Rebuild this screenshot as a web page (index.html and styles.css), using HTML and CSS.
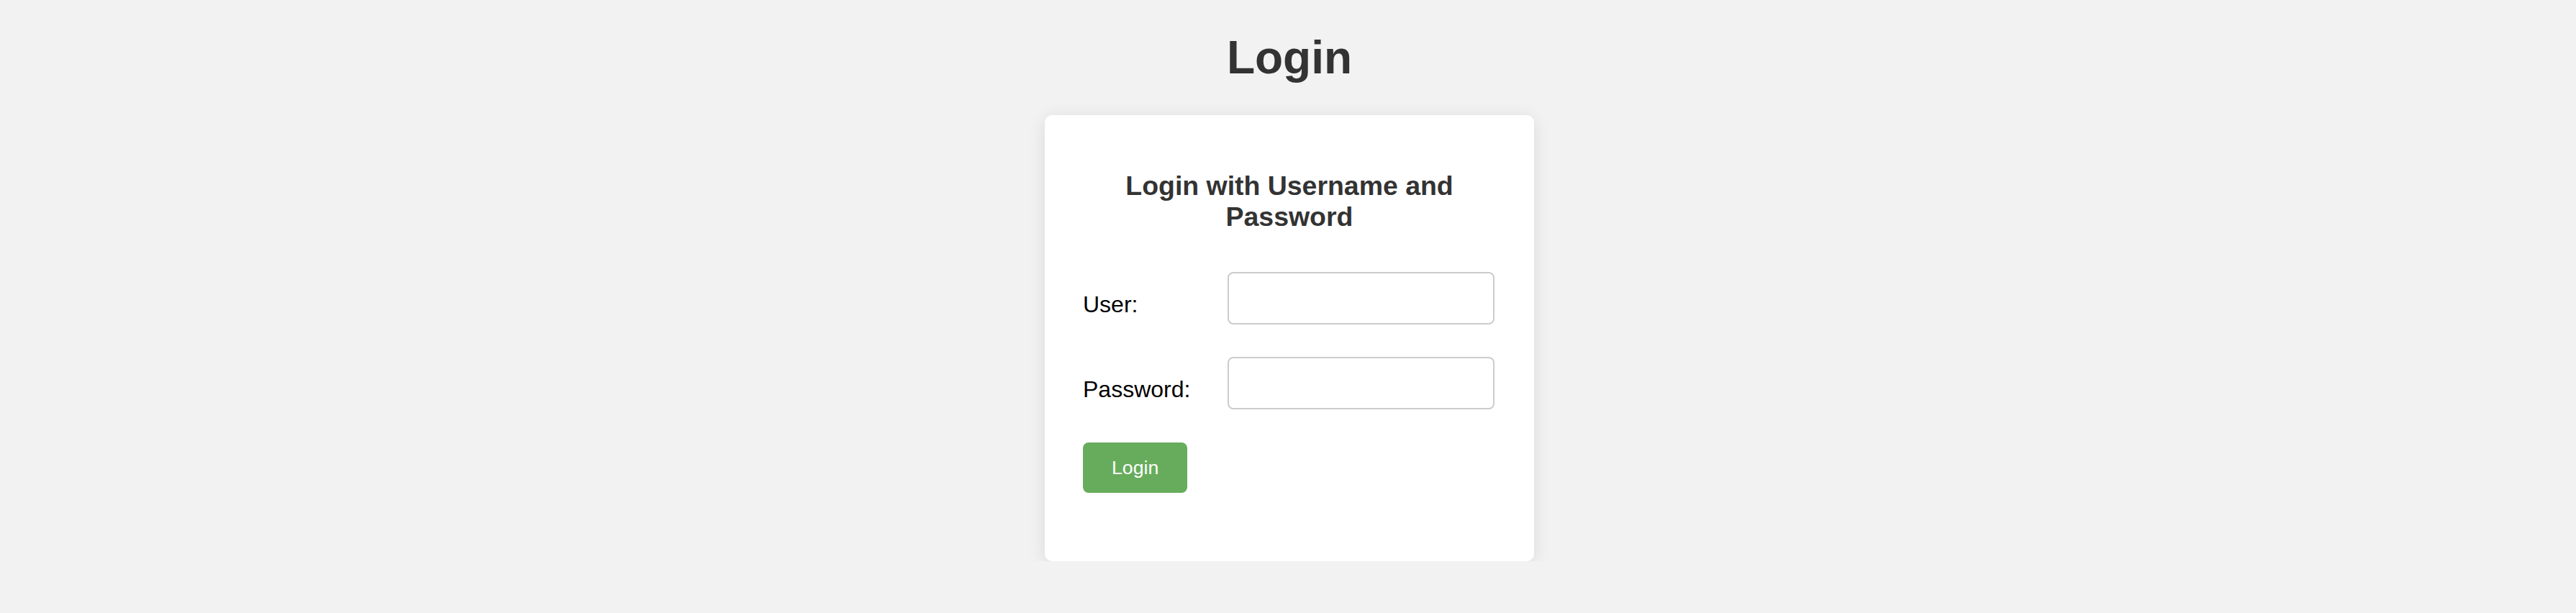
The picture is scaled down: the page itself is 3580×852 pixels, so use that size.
FILE: index.html
```html
<!DOCTYPE html>
<html lang="en">
<head>
<meta charset="utf-8">
<title>Login</title>
<link rel="stylesheet" href="styles.css">
</head>
<body>
  <h1 class="page-title">Login</h1>
  <div class="card">
    <h3 class="card-title">Login with Username and Password</h3>
    <form class="login-form">
      <div class="form-row">
        <label class="form-label" for="user">User:</label>
        <input class="form-input" type="text" id="user" name="user">
      </div>
      <div class="form-row">
        <label class="form-label" for="password">Password:</label>
        <input class="form-input" type="password" id="password" name="password">
      </div>
      <div class="form-actions">
        <button class="btn-login" type="submit">Login</button>
      </div>
    </form>
  </div>
</body>
</html>
```

FILE: styles.css
```css
html, body {
  background: #f2f2f2;
}

body {
  margin: 0 6px 0 10px;
  padding-top: 1px;
  font-family: "Liberation Sans", Arial, Helvetica, sans-serif;
  color: #000;
}

.page-title {
  font-size: 64px;
  font-weight: bold;
  color: #333;
  text-align: center;
  margin: 42px 0 42.88px;
}

.card {
  width: 680px;
  box-sizing: border-box;
  margin: 0 auto;
  padding: 40px;
  background: #fff;
  border-radius: 10px;
  box-shadow: 0 4px 24px rgba(0, 0, 0, 0.1);
}

.card-title {
  font-size: 37.44px;
  font-weight: bold;
  color: #333;
  text-align: center;
  margin: 37.44px 0;
}

.login-form {
  display: flex;
  flex-direction: column;
  gap: 45.5px;
  padding: 17px 14px 54.5px 13px;
}

.form-row {
  display: flex;
  align-items: flex-start;
}

.form-label {
  width: 201px;
  flex: none;
  font-size: 32px;
  padding-top: 27px;
  color: #000;
}

.form-input {
  width: 371px;
  height: 73px;
  box-sizing: border-box;
  border: 2px solid #cccccc;
  border-radius: 8px;
  padding: 16px;
  font-size: 26.67px;
  font-family: "Liberation Sans", Arial, sans-serif;
  background: #fff;
  outline: none;
}

.form-actions {
  display: flex;
}

.btn-login {
  background: #67ac5c;
  color: #fff;
  border: none;
  border-radius: 8px;
  padding: 20px 40px;
  font-size: 26.67px;
  font-family: "Liberation Sans", Arial, sans-serif;
  line-height: 30.6px;
  cursor: pointer;
}
```
